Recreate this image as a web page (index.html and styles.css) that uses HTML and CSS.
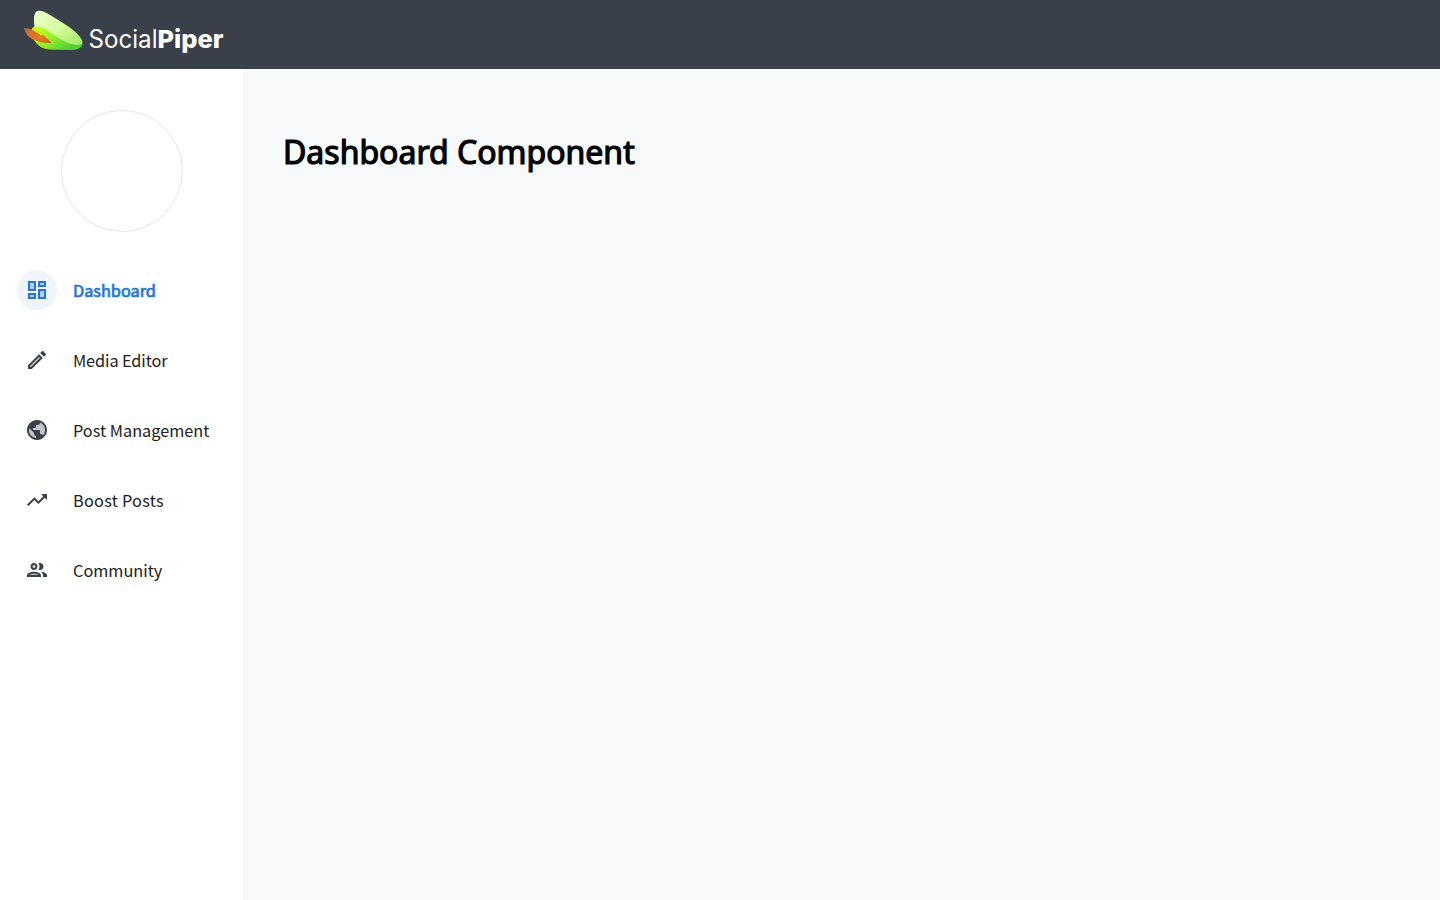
FILE: index.html
```html
<!DOCTYPE html>
<html lang="en">
<head>
<meta charset="utf-8">
<title>SocialPiper</title>
<link rel="stylesheet" href="styles.css">
</head>
<body>
<header class="topbar">
  <svg class="logo" width="202" height="48" viewBox="0 0 202 48" role="img" aria-label="SocialPiper">
    <defs>
      <linearGradient id="cap" x1="0" y1="0" x2="1" y2="1"><stop offset="0" stop-color="#efffd2"/><stop offset=".5" stop-color="#d5fd9c"/><stop offset="1" stop-color="#a0ec62"/></linearGradient>
      <linearGradient id="brim" x1="0" y1="0" x2="1" y2=".55"><stop offset="0" stop-color="#dcff16"/><stop offset=".5" stop-color="#96ef28"/><stop offset="1" stop-color="#4ccf3c"/></linearGradient>
      <linearGradient id="feather" x1="0" y1="0" x2="1" y2="1"><stop offset="0" stop-color="#b8683e"/><stop offset=".55" stop-color="#e87a20"/><stop offset="1" stop-color="#c8601c"/></linearGradient>
    </defs>
    <path fill="url(#brim)" d="M11 18C7 20 6 25 8 29C12 36 17 41 25 41.500L48 42C54 42 59 39 58.500 35C58 30 50 27 42 27C30 25 22 15 11 18Z"/>
    <path fill="url(#cap)" d="M10.500 19C10 13 9 5 13 3.200C17 2 21 4 26 7C38 14 51 22 56 29C59 33 59 35 57 36.500C51 38 43 35 36 31C27 26 20 17 10.500 19Z"/>
    <path fill="url(#feather)" d="M0 20C5 20 12 23 17 27.500L20 27L22 30C24 31 27 34 27 35C20 35 14 34 9 31.500C4 29 1 25 0 20Z"/>
    <text class="logo-text" x="64.500" y="40" textLength="69" lengthAdjust="spacingAndGlyphs">Social</text>
    <text class="logo-text logo-strong" x="133.500" y="40" textLength="66" lengthAdjust="spacingAndGlyphs">Piper</text>
  </svg>
</header>
<div class="layout">
  <aside class="sidebar">
    <div class="avatar"></div>
    <nav class="menu">
      <a class="item active"><span class="icon"><svg viewBox="0 0 24 24"><path opacity=".3" d="M5 5h4v6H5zm10 8h4v6h-4zM5 17h4v2H5zM15 5h4v2h-4z"/><path d="M3 13h8V3H3v10zm2-8h4v6H5V5zm8 16h8V11h-8v10zm2-8h4v6h-4v-6zM13 3v6h8V3h-8zm6 4h-4V5h4v2zM3 21h8v-6H3v6zm2-4h4v2H5v-2z"/></svg></span><span class="label">Dashboard</span></a>
      <a class="item"><span class="icon"><svg viewBox="0 0 24 24"><path opacity=".3" d="M5 18.080V19h.920l9.060-9.060-.920-.920z"/><path d="M20.710 7.040c.390-.390.390-1.020 0-1.410l-2.340-2.340c-.200-.200-.450-.290-.710-.290s-.510.100-.700.290l-1.830 1.830 3.750 3.750 1.830-1.830zM3 17.250V21h3.750L17.810 9.940l-3.750-3.750L3 17.250zM5.920 19H5v-.920l9.060-9.060.920.920L5.920 19z"/></svg></span><span class="label media">Media Editor</span></a>
      <a class="item"><span class="icon"><svg viewBox="0 0 24 24"><path opacity=".3" d="M14.990 4.590V5c0 1.100-.900 2-2 2h-2v2c0 .550-.450 1-1 1h-2v2h6c.550 0 1 .450 1 1v3h1c.890 0 1.640.590 1.900 1.400C19.190 15.980 20 14.080 20 12c0-3.350-2.080-6.230-5.010-7.410zM8.990 16v-1l-4.780-4.780C4.080 10.790 4 11.390 4 12c0 4.070 3.060 7.430 6.990 7.930V18c-1.100 0-2-.900-2-2z"/><path d="M12 2C6.480 2 2 6.480 2 12s4.480 10 10 10 10-4.480 10-10S17.520 2 12 2zm-1.010 17.930C7.060 19.430 4 16.070 4 12c0-.610.080-1.210.210-1.780L8.990 15v1c0 1.100.900 2 2 2v1.930zm6.900-2.530c-.260-.810-1-1.400-1.900-1.400h-1v-3c0-.550-.450-1-1-1h-6v-2h2c.550 0 1-.450 1-1V7h2c1.100 0 2-.900 2-2v-.410C17.920 5.770 20 8.650 20 12c0 2.080-.810 3.980-2.110 5.400z"/></svg></span><span class="label">Post Management</span></a>
      <a class="item"><span class="icon"><svg viewBox="0 0 24 24"><path d="M16 6l2.290 2.290-4.880 4.880-4-4L2 16.590 3.410 18l6-6 4 4 6.300-6.290L22 12V6h-6z"/></svg></span><span class="label boost">Boost Posts</span></a>
      <a class="item"><span class="icon"><svg viewBox="0 0 24 24"><circle cx="9" cy="8.500" opacity=".3" r="1.500"/><path opacity=".3" d="M4.340 17h9.320c-.840-.580-2.870-1.250-4.660-1.250s-3.820.670-4.660 1.250z"/><path d="M9 12c1.930 0 3.500-1.570 3.500-3.500S10.930 5 9 5 5.500 6.570 5.500 8.500 7.070 12 9 12zm0-5c.830 0 1.500.670 1.500 1.500S9.830 10 9 10s-1.500-.670-1.500-1.500S8.170 7 9 7zm0 6.750c-2.340 0-7 1.170-7 3.500V19h14v-1.750c0-2.330-4.660-3.500-7-3.500zM4.340 17c.840-.580 2.870-1.250 4.660-1.250s3.820.670 4.660 1.250H4.340zm11.700-3.190c1.160.840 1.960 1.960 1.960 3.440V19h4v-1.750c0-2.020-3.500-3.170-5.960-3.440zM15 12c1.930 0 3.500-1.570 3.500-3.500S16.930 5 15 5c-.540 0-1.040.130-1.500.350.630.890 1 1.980 1 3.150s-.370 2.260-1 3.150c.460.220.960.350 1.500.350z"/></svg></span><span class="label">Community</span></a>
    </nav>
  </aside>
  <main class="content"><h1 class="title">Dashboard Component</h1></main>
</div>
</body>
</html>
```
FILE: styles.css
```css
* { box-sizing: border-box; }
body { margin: 0; height: 100vh; display: flex; flex-direction: column; overflow: hidden; background: #f8f9fb; font-family: "Noto Sans CJK SC", "Noto Sans", sans-serif; }
.topbar { height: 69px; flex: none; padding: 8px 24px; background: #39404a; }
.logo { display: block; overflow: visible; }
.logo-text { font-family: Inter, sans-serif; font-size: 25px; font-weight: 400; fill: #fff; }
.logo-strong { font-weight: 800; }
.layout { display: flex; flex: 1; }
.sidebar { width: 243px; flex: none; background: #fff; padding-top: 41px; }
.avatar { width: 122px; height: 122px; margin: 0 auto; border: 1px solid #e7e7e7; border-radius: 50%; }
.menu { display: flex; flex-direction: column; gap: 30px; padding: 38px 0 0 17px; }
.item { display: flex; align-items: center; gap: 16px; height: 40px; color: #212121; }
.icon { display: flex; align-items: center; justify-content: center; width: 40px; height: 40px; border-radius: 50%; }
.icon svg { width: 24px; height: 24px; fill: #39404a; }
.label { font-size: 16.3px; line-height: 24px; white-space: nowrap; }
.media { letter-spacing: -0.1px; }
.boost { letter-spacing: 0.25px; }
.active { color: #2376d8; }
.active .icon { background: #f0f5fc; }
.active .icon svg { fill: #2376d8; }
.active .label { -webkit-text-stroke: 0.7px currentColor; }
.content { flex: 1; padding: 61px 40px; }
.title { margin: 0; font-family: "Noto Sans", sans-serif; font-size: 32px; line-height: 44px; font-weight: 400; color: #000; -webkit-text-stroke: 1.2px #000; }
```
